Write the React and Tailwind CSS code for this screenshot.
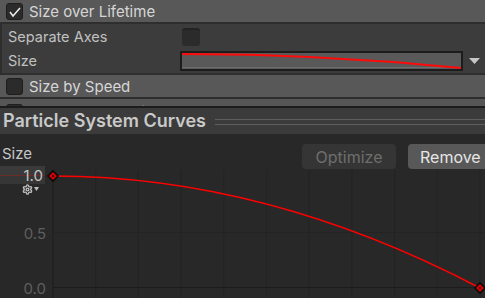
import { Settings } from 'lucide-react'

function Check({ checked }) {
  return (
    <div className="w-[17px] h-[17px] shrink-0 rounded-[3px] bg-[#2b2b2b] border border-[#1e1e1e] flex items-center justify-center">
      {checked && (
        <svg width="15" height="15" viewBox="0 0 15 15">
          <path d="M3 8 L6 12 L13 4" stroke="#ececec" strokeWidth="1.5" fill="none" />
        </svg>
      )}
    </div>
  )
}

function Key({ x, y }) {
  return (
    <g>
      <polygon points={`${x},${y - 5} ${x + 5},${y} ${x},${y + 5} ${x - 5},${y}`} fill="#e10000" stroke="#0a0a0a" strokeWidth="1.6" />
      <circle cx={x} cy={y} r="1.3" fill="#5a0000" />
    </g>
  )
}

export default function App() {
  const cols = Array.from({ length: 11 }, (_, i) => i * 42.7)

  return (
    <div className="w-[485px] h-[298px] overflow-hidden bg-[#282828] font-['Inter','Noto_Sans',sans-serif] select-none">
      {/* Size over Lifetime header */}
      <div className="h-[24px] bg-[#585858] border-b-2 border-[#2e2e2e] flex items-center pl-[6px] gap-[6px]">
        <Check checked />
        <span className="text-[15px] text-[#d6d6d6] leading-none">Size over Lifetime</span>
      </div>

      {/* Module content */}
      <div className="h-[51px] bg-[#3c3c3c] border-b-2 border-l-2 border-[#2e2e2e] pl-[6px] flex flex-col">
        <div className="h-[25px] flex items-center pt-[1px]">
          <span className="w-[174px] text-[14.5px] text-[#c0c0c0] leading-none">Separate Axes</span>
          <div className="w-[18px] h-[18px] rounded-[3px] bg-[#2b2b2b] border-t-2 border-[#232323]" />
        </div>
        <div className="h-[24px] flex items-center">
          <span className="w-[172px] text-[14.5px] text-[#c0c0c0] leading-none">Size</span>
          <div className="w-[283px] h-[20px] border-2 border-[#1c1c1c] bg-[#595959]">
            <svg width="279" height="16" viewBox="0 0 279 16" className="block">
              <line x1="0" y1="14.5" x2="262" y2="14.5" stroke="#6c6c6c" strokeWidth="1" />
              <path d="M0 1 Q139.5 1 279 15" stroke="#ff0a0a" strokeWidth="2" fill="none" />
            </svg>
          </div>
          <svg width="11" height="7" viewBox="0 0 11 7" className="ml-[6px]">
            <polygon points="0,0 11,0 5.5,6" fill="#c6c6c6" />
          </svg>
        </div>
      </div>

      {/* Size by Speed header */}
      <div className="h-[24px] bg-[#585858] border-b-2 border-[#2e2e2e] flex items-center pl-[6px] gap-[6px]">
        <Check />
        <span className="text-[15px] text-[#d6d6d6] leading-none">Size by Speed</span>
      </div>

      {/* Rotation over Lifetime header, clipped */}
      <div className="h-[9px] overflow-hidden bg-[#565656] border-b-2 border-[#1c1c1c]">
        <div className="h-[22px] flex items-center pl-[6px] gap-[6px] pt-[4px]">
          <Check />
          <span className="text-[15px] text-[#d6d6d6] leading-none">Rotation over Lifetime</span>
        </div>
      </div>

      {/* Particle System Curves title */}
      <div className="h-[26px] bg-[#3b3b3b] flex items-center pl-[3px] gap-[9px]">
        <span className="text-[18px] font-semibold text-[#c9c9c9] leading-none whitespace-nowrap">Particle System Curves</span>
        <div className="flex-1 flex flex-col gap-[4px] pt-[1px]">
          <div className="h-px bg-[#5e5e5e]" />
          <div className="h-px bg-[#5e5e5e]" />
        </div>
      </div>

      {/* Curve editor */}
      <div className="bg-[#282828]">
        <div className="h-[35px] flex items-end">
          <span className="w-[300px] shrink-0 pl-[2px] pb-[8px] text-[15px] text-[#c6c6c6] leading-none">Size</span>
          <button className="w-[94px] h-[25px] shrink-0 ml-[2px] rounded-[4px] bg-[#353535] text-[16px] text-[#6e6e6e] leading-none">
            Optimize
          </button>
          <button className="w-[90px] h-[25px] shrink-0 ml-[12px] rounded-l-[4px] bg-[#585858] text-[16px] text-[#e6e6e6] leading-none text-left pl-[12px]">
            Remove
          </button>
        </div>

        <div className="flex mt-[-3px]">
          <div className="w-[53px] shrink-0 flex flex-col">
            <div className="w-[45px] h-[18px] flex items-center justify-end pr-[2px] bg-[linear-gradient(to_bottom,#3a3a3a_0,#3a3a3a_9px,#6b2a2a_9px,#6b2a2a_10px,#363636_10px)]">
              <span className="text-[15px] text-[#c4c4c4] leading-none">1.0</span>
            </div>
            <div className="h-[10px] flex items-center pl-[22px] gap-[1px] text-[#bdbdbd]">
              <Settings size={11} strokeWidth={3} />
              <svg width="5" height="4" viewBox="0 0 5 4"><polygon points="0,0 5,0 2.5,4" fill="#bdbdbd" /></svg>
            </div>
            <span className="mt-[32px] w-[46px] text-right text-[15px] text-[#5f5f5f] leading-none">0.5</span>
            <span className="mt-[40px] w-[46px] text-right text-[15px] text-[#5f5f5f] leading-none">0.0</span>
          </div>
          <svg width="432" height="132" viewBox="0 0 432 132" className="block overflow-visible">
            {cols.map((x, i) => (
              <line key={i} x1={x} y1="4" x2={x} y2="132" stroke={i === 0 ? '#1c1c1c' : '#232323'} strokeWidth="1" />
            ))}
            <line x1="0" y1="66.5" x2="432" y2="66.5" stroke="#232323" strokeWidth="1" />
            <line x1="0" y1="121.5" x2="432" y2="121.5" stroke="#1c1c1c" strokeWidth="1" />
            <path d="M0 10 Q213.5 10 427 122" stroke="#ff0000" strokeWidth="1.6" fill="none" />
            <Key x={0} y={10} />
            <Key x={427} y={122} />
          </svg>
        </div>
      </div>
    </div>
  )
}
